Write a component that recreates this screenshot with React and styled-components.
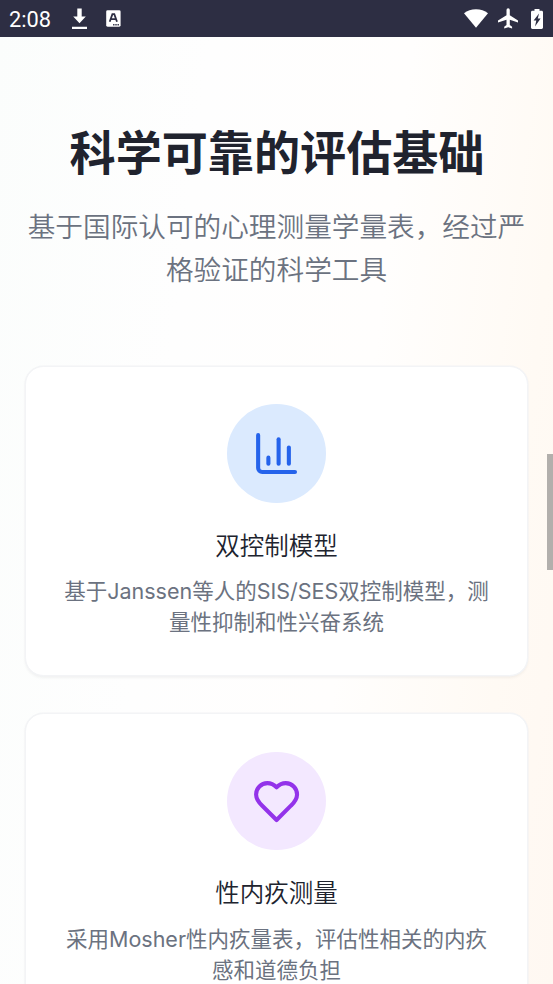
import React from 'react';
import styled, { createGlobalStyle } from 'styled-components';
import { ChartColumn } from 'lucide-react';

const GlobalStyle = createGlobalStyle`
  * {
    box-sizing: border-box;
  }
  body {
    margin: 0;
    overflow: hidden;
    font-family: Inter, 'Noto Sans CJK SC', sans-serif;
  }
  h2, h3, p {
    margin: 0;
  }
`;

// heart with a pointed tip
const Heart = ({ size, color, strokeWidth }) => (
  <svg
    width={size}
    height={size}
    viewBox="0 0 24 24"
    fill="none"
    stroke={color}
    strokeWidth={strokeWidth}
    strokeLinecap="round"
    strokeLinejoin="round"
  >
    <path d="M19 14c1.49-1.46 3-3.21 3-5.5A5.5 5.5 0 0 0 16.5 3c-1.76 0-3 .5-4.5 2-1.5-1.5-2.74-2-4.5-2A5.5 5.5 0 0 0 2 8.5c0 2.3 1.5 4.05 3 5.5l7 7Z" />
  </svg>
);

const features = [
  {
    title: '双控制模型',
    text: '基于Janssen等人的SIS/SES双控制模型，测量性抑制和性兴奋系统',
    icon: ChartColumn,
    color: '#2563eb',
    tint: '#dbeafe',
  },
  {
    title: '性内疚测量',
    text: '采用Mosher性内疚量表，评估性相关的内疚感和道德负担',
    icon: Heart,
    color: '#9333ea',
    tint: '#f3e8ff',
  },
];

const StatusIcons = () => (
  <>
    <Glyph $left={20} width="17" height="21" viewBox="0 0 17 21">
      <path d="M6.3 0.6h4.400v8h4.100L8.500 15.200 2.200 8.600h4.100zM1 18.800h15v2.100H1z" />
    </Glyph>
    <Glyph $left={18} width="15" height="17" viewBox="0 0 15 17">
      <rect width="14.4" height="16.4" x="0.2" y="0.3" rx="1.4" />
      <path d="M3.7 11.7 6.4 4.2h1.9l2.7 7.5M5 9.2h4.7" fill="none" stroke="#2d2e43" strokeWidth="1.8" />
      <path d="M7.1 14h1.4v1.4H7.1zM9.3 14h1.4v1.4H9.3zM11.5 14h1.4v1.4h-1.4z" fill="#2d2e43" />
    </Glyph>
    <Spacer />
    <Glyph width="24" height="19" viewBox="0 0 24 19">
      <path d="M12 18.8 0 4.2C3.3 1.600 7.400 0.200 12 0.200s8.700 1.400 12 4z" />
    </Glyph>
    <Glyph $left={10} width="20" height="21" viewBox="0 0 20 21">
      <path d="M20 14.4v-2l-8.200-5.200V2A1.650 1.650 0 0 0 8.500 2v5.200L0 12.400v2l8.500-2.700v5.400l-2.300 1.700v1.700l4-1.200 3.900 1.200v-1.700l-2.300-1.700v-5.400z" />
    </Glyph>
    <Glyph $left={13} width="12" height="20" viewBox="0 0 12 20">
      <path d="M3.5 0h5v1.8h2.1c.8 0 1.4.6 1.4 1.4v15.4c0 .8-.6 1.4-1.4 1.4H1.4C.6 20 0 19.400 0 18.600V3.200c0-.8.6-1.400 1.400-1.400h2.100z" />
      <path d="M8 4.500 2.600 11.600h2.700l-1.300 6 5.600-8.200H6.800z" fill="#2d2e43" />
    </Glyph>
  </>
);

const Feature = ({ feature }) => {
  const Icon = feature.icon;

  return (
    <Card>
      <IconCircle $tint={feature.tint}>
        <Icon size={49.15} color={feature.color} strokeWidth={2} />
      </IconCircle>
      <CardTitle>{feature.title}</CardTitle>
      <CardText>{feature.text}</CardText>
    </Card>
  );
};

export default function App() {
  return (
    <Screen>
      <GlobalStyle />
      <StatusBar>
        <Clock>2:08</Clock>
        <StatusIcons />
      </StatusBar>
      <Section>
        <Title>科学可靠的评估基础</Title>
        <Subtitle>基于国际认可的心理测量学量表，经过严格验证的科学工具</Subtitle>
        <CardList>
          {features.map(feature => (
            <Feature key={feature.title} feature={feature} />
          ))}
        </CardList>
      </Section>
      <ScrollThumb />
    </Screen>
  );
}

const Screen = styled.div`
  position: relative;
  display: flex;
  flex-direction: column;
  height: 984px;
  overflow: hidden;
  background: linear-gradient(97deg, #fbfdfc 0%, #fefefe 32%, #fffefd 62%, #fffaf4 86%, #fff8f2 100%);
`;

const StatusBar = styled.div`
  display: flex;
  flex: none;
  align-items: center;
  height: 37px;
  padding: 0 10px 0 9px;
  background: #2d2e43;
`;

const Clock = styled.span`
  font: 450 21.8px/37px Roboto, sans-serif;
  color: #fff;
  width: 42px;
  padding-top: 1px;
`;

const Glyph = styled.svg`
  flex: none;
  margin-left: ${props => props.$left || 0}px;
  fill: #fff;
`;

const Spacer = styled.div`
  flex: 1;
`;

const Section = styled.section`
  flex: none;
  padding: 89px 24.6px 0;
  text-align: center;
`;

const Title = styled.h2`
  padding-left: 1px;
  font-size: 46.1px;
  line-height: 55.3px;
  font-weight: 700;
  color: #20232e;
`;

const Subtitle = styled.p`
  margin-top: 24.6px;
  font-size: 27.65px;
  line-height: 43px;
  font-weight: 350;
  color: #6b7280;
`;

const CardList = styled.div`
  display: flex;
  flex-direction: column;
  gap: 37.6px;
  margin-top: 74px;
`;

const Card = styled.div`
  display: flex;
  flex-direction: column;
  align-items: center;
  padding: 37.5px 37.4px 37px;
  border: 1px solid #f3f4f6;
  border-radius: 18.4px;
  background: #fff;
  box-shadow: 0 0 0 0.5px #f3f4f6, 0 1.5px 3px rgba(0, 0, 0, 0.05);
`;

const IconCircle = styled.div`
  display: flex;
  align-items: center;
  justify-content: center;
  width: 98.3px;
  height: 98.3px;
  border-radius: 50%;
  background: ${props => props.$tint};
`;

const CardTitle = styled.h3`
  margin-top: 25.2px;
  font-size: 24.5px;
  line-height: 36.9px;
  font-weight: 350;
  color: #20232e;
`;

// 390 picks the DemiLight cut for Chinese, Latin stays close to regular
const CardText = styled.p`
  margin-top: 11.7px;
  font-size: 21.5px;
  line-height: 30.7px;
  font-weight: 390;
  color: #6b7280;
`;

const ScrollThumb = styled.div`
  position: absolute;
  top: 454px;
  right: 0;
  width: 6px;
  height: 116px;
  background: #b2afac;
`;
